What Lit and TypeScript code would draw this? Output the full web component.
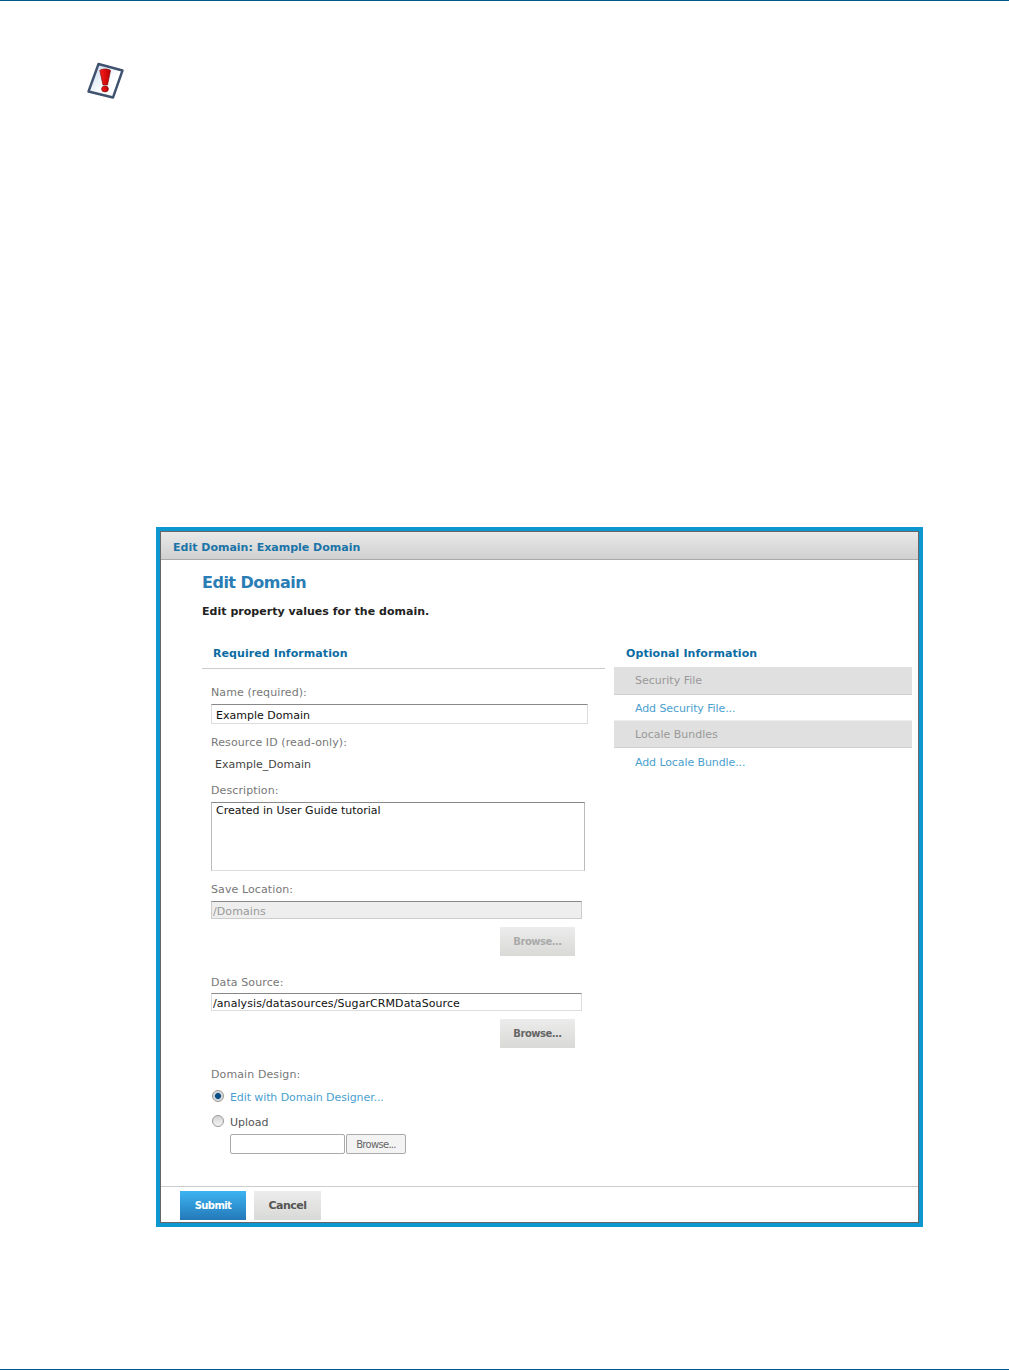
import { LitElement, html, css } from "lit";
import { customElement } from "lit/decorators.js";

@customElement("app-root")
export class AppRoot extends LitElement {
  static styles = css`
    :host { display: block; width: 1009px; height: 1370px; background: #fff; font-family: "DejaVu Sans", Verdana, sans-serif; font-size: 11px; color: #555; }
    * { box-sizing: border-box; }
    .page { display: flex; flex-direction: column; height: 1370px; border-top: 1px solid #005a8c; border-bottom: 1px solid #005a8c; }
    .note { padding: 61px 0 0 87px; height: 526px; }
    .note svg { display: block; }
    .figure { margin-left: 156px; width: 767px; height: 700px; border: 4px solid #0e96d1; display: flex; flex-direction: column; }
    .inner { flex: 1; border: 1px solid #666; display: flex; flex-direction: column; min-height: 0; }
    .header { height: 28px; flex: none; padding: 3px 0 0 12px; line-height: 26px; font-weight: bold; font-size: 11px; color: #1a74a8; background: linear-gradient(#e9e9e9, #d0d0d0); border-bottom: 1px solid #aaa; }
    .body { flex: 1; padding: 11px 6px 0 41px; }
    h1 { margin: 0; padding-top: 2px; font-size: 16px; letter-spacing: -0.5px; line-height: 20px; font-weight: bold; color: #2a7db5; }
    .sub { margin: 11px 0 0; padding-top: 2px; line-height: 12px; font-weight: bold; color: #222; letter-spacing: 0.03px; }
    .cols { display: flex; gap: 9px; margin-top: 27px; }
    .left { width: 403px; flex: none; }
    .right { flex: 1; }
    h2 { margin: 0; font-size: 11px; line-height: 14px; padding-top: 2px; font-weight: bold; color: #0d6ca3; letter-spacing: 0.08px; }
    .left h2 { padding-left: 11px; border-bottom: 1px solid #ccc; height: 24px; }
    .right h2 { padding-left: 12px; height: 22px; }
    .form { padding-left: 9px; }
    .lab { line-height: 12px; padding-top: 2px; color: #777; letter-spacing: 0.1px; }
    .val { line-height: 12px; padding-top: 2px; margin: 8px 0 0 4px; color: #444; }
    .mt11 { margin-top: 11px; } .mt12 { margin-top: 12px; } .mt16 { margin-top: 16px; } .mt19 { margin-top: 19px; }
    .field { display: block; font: inherit; color: #111; background: #fff; border: 1px solid #ddd; border-top-color: #888; outline: none; padding: 2px 4px 0; margin: 5px 0 0; }
    .name { width: 377px; height: 20px; }
    .area { width: 374px; height: 69px; padding: 1px 4px 0; resize: none; line-height: 14px; border-left-color: #bbb; border-right-color: #bbb; }
    .short { width: 371px; height: 18px; padding: 2px 1px 0; letter-spacing: 0.08px; }
    .short.dis { background: #eee; color: #999; border-color: #888 #ccc #ccc; }
    .ds { margin-top: 4px; }
    .btnrow { display: flex; margin: 8px 0 0 289px; }
    button { font: inherit; border: 0; padding: 0; }
    .btn { width: 75px; height: 29px; font-weight: bold; font-size: 10px; letter-spacing: -0.5px; color: #666; background: linear-gradient(#ececec, #d9d9d7); }
    .btn.dis { color: #aaa; }
    .radio { display: flex; gap: 6px; line-height: 12px; padding-top: 0; height: 14px; }
    .radio > a, .radio > span:last-child { padding-top: 2px; }
    .r1 { margin-top: 9px; } .r2 { margin-top: 11px; }
    .dot { width: 12px; height: 12px; flex: none; margin-left: 1px; border-radius: 50%; border: 1px solid #999; background: linear-gradient(#d4d4d4, #f4f4f4); }
    .dot.on { background: radial-gradient(circle, #0a4f86 0 2.6px, #9fb4c6 3.2px, #dcdcdc 3.8px); }
    a { color: #4a9fcf; text-decoration: none; letter-spacing: -0.1px; }
    .file { display: flex; gap: 1px; margin: 5px 0 0 19px; }
    .fname { width: 115px; height: 20px; border: 1px solid #aaa; border-radius: 2px; }
    .fbtn { width: 60px; height: 20px; border: 1px solid #aaa; border-radius: 2px; background: #f3f3f3; font-size: 10px; letter-spacing: -0.7px; color: #666; }
    .bar { height: 28px; line-height: 24px; padding: 2px 0 0 21px; background: #e0e0e0; border-bottom: 1px solid #d0d0d0; color: #999; }
    .bar.b2 { border-top: 1px solid #eee; }
    .link { height: 25px; line-height: 24px; padding: 2px 0 0 21px; }
    .link.l2 { padding-top: 3px; }
    .footer { flex: none; height: 36px; border-top: 1px solid #ccc; padding: 4px 0 0 19px; display: flex; gap: 8px; }
    .submit, .cancel { height: 29px; font-weight: bold; letter-spacing: -0.5px; }
    .submit { width: 66px; color: #fff; font-size: 10px; letter-spacing: -0.6px; background: linear-gradient(#3db4f2, #2478b8); }
    .cancel { width: 67px; color: #555; background: linear-gradient(#ececec, #d9d9d7); }
  `;

  render() {
    return html`
      <div class="page">
        <div class="note">
          <svg width="38" height="38" viewBox="0 0 38 38">
            <defs>
              <linearGradient id="pg" x1="0" y1="0" x2="1" y2="1"><stop offset="0" stop-color="#c3d5ea"/><stop offset=".6" stop-color="#fff"/></linearGradient>
              <linearGradient id="ex" x1="0" y1="0" x2="1" y2="0"><stop offset="0" stop-color="#ff1a1a"/><stop offset="1" stop-color="#b80000"/></linearGradient>
            </defs>
            <path d="M11.5 2 L35.5 8.5 L26 35.5 L1.5 29.5 Z" fill="url(#pg)" stroke="#3f526f" stroke-width="2.4" stroke-linejoin="round"/>
            <path d="M12.8 8.5 C15 6.5 21.5 6.5 23.5 8.5 L20.5 23 L16 23 Z" fill="url(#ex)" stroke="#7d0b0b" stroke-width=".7"/>
            <ellipse cx="18" cy="27" rx="3.4" ry="2.9" fill="url(#ex)" stroke="#7d0b0b" stroke-width=".7"/>
          </svg>
        </div>
        <div class="figure">
          <div class="inner">
            <div class="header">Edit Domain: Example Domain</div>
            <div class="body">
              <h1>Edit Domain</h1>
              <p class="sub">Edit property values for the domain.</p>
              <div class="cols">
                <div class="left">
                  <h2>Required Information</h2>
                  <div class="form">
                    <div class="lab mt16">Name (required):</div>
                    <input class="field name" value="Example Domain" />
                    <div class="lab mt11">Resource ID (read-only):</div>
                    <div class="val">Example_Domain</div>
                    <div class="lab mt12">Description:</div>
                    <textarea class="field area">Created in User Guide tutorial</textarea>
                    <div class="lab mt11">Save Location:</div>
                    <input class="field short dis" value="/Domains" disabled />
                    <div class="btnrow"><button class="btn dis">Browse...</button></div>
                    <div class="lab mt19">Data Source:</div>
                    <input class="field short ds" value="/analysis/datasources/SugarCRMDataSource" />
                    <div class="btnrow"><button class="btn">Browse...</button></div>
                    <div class="lab mt19">Domain Design:</div>
                    <div class="radio r1"><span class="dot on"></span><a>Edit with Domain Designer...</a></div>
                    <div class="radio r2"><span class="dot"></span><span>Upload</span></div>
                    <div class="file"><div class="fname"></div><button class="fbtn">Browse...</button></div>
                  </div>
                </div>
                <div class="right">
                  <h2>Optional Information</h2>
                  <div class="bar">Security File</div>
                  <div class="link"><a>Add Security File...</a></div>
                  <div class="bar b2">Locale Bundles</div>
                  <div class="link l2"><a>Add Locale Bundle...</a></div>
                </div>
              </div>
            </div>
            <div class="footer">
              <button class="submit">Submit</button>
              <button class="cancel">Cancel</button>
            </div>
          </div>
        </div>
      </div>
    `;
  }
}
